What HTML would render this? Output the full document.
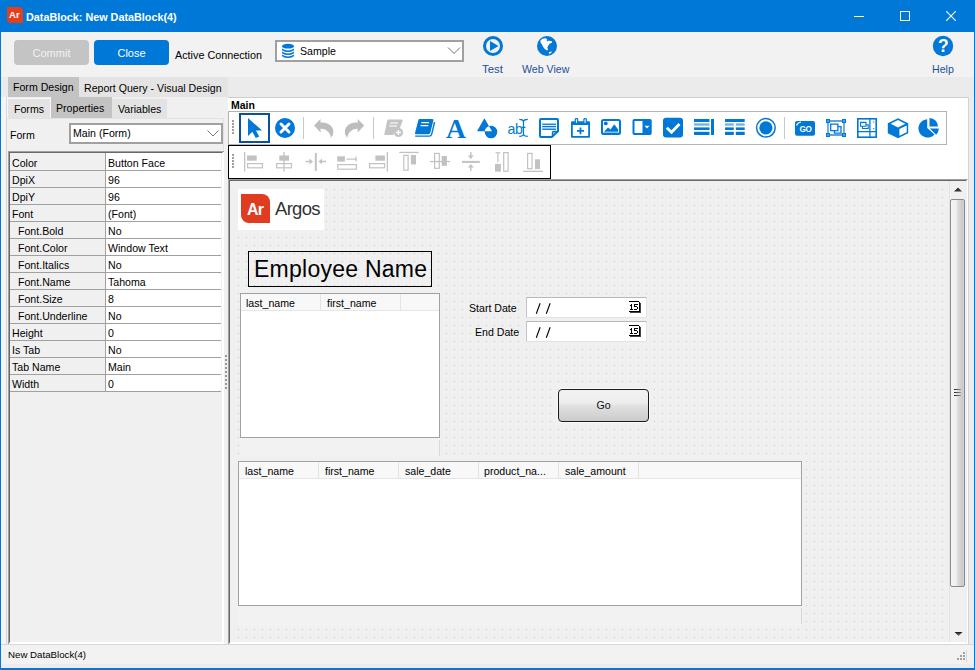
<!DOCTYPE html>
<html><head><meta charset="utf-8">
<style>
*{box-sizing:border-box;margin:0;padding:0}
html,body{width:975px;height:670px;overflow:hidden;background:#f0f0f0;font-family:"Liberation Sans",sans-serif;font-size:10.6px;color:#000}
.a{position:absolute}
.t{position:absolute;white-space:nowrap;line-height:1}
</style></head><body>
<!-- window frame -->
<div class="a" style="left:0;top:0;width:975px;height:670px;background:#0078d7"></div>
<div class="a" style="left:1px;top:32px;width:973px;height:636px;background:#f0f0f0"></div>
<!-- title bar -->
<div class="a" style="left:7px;top:7px;width:16px;height:16px;background:#e43f1c;border-radius:0 4px 0 4px"></div>
<div class="t" style="left:9px;top:10px;color:#fff;font-weight:bold;font-size:9.6px">Ar</div>
<div class="t" style="left:26px;top:12px;color:#fff;font-weight:bold;font-size:10.8px">DataBlock: New DataBlock(4)</div>
<div class="a" style="left:854px;top:16px;width:10px;height:1px;background:#fff"></div>
<div class="a" style="left:900px;top:11px;width:10px;height:10px;border:1px solid #fff"></div>
<svg class="a" style="left:946px;top:11px" width="10" height="10"><path d="M0 0L10 10M10 0L0 10" stroke="#fff" stroke-width="1.1"/></svg>

<!-- top toolbar -->
<div class="a" style="left:1px;top:32px;width:973px;height:45px;background:#f2f2f2"></div>
<div class="a" style="left:14px;top:40px;width:75px;height:25px;background:#c4c4c4;border-radius:4px"></div>
<div class="t" style="left:14px;top:48px;width:75px;text-align:center;color:#f2f2f2;font-size:11px">Commit</div>
<div class="a" style="left:94px;top:40px;width:75px;height:25px;background:#0078d7;border-radius:4px"></div>
<div class="t" style="left:94px;top:48px;width:75px;text-align:center;color:#fff;font-size:11px">Close</div>
<div class="t" style="left:175px;top:50px;font-size:10.8px">Active Connection</div>
<div class="a" style="left:275px;top:40px;width:189px;height:22px;background:#fff;border:2px solid #a0a0a0"></div>
<div class="t" style="left:300px;top:46px;font-size:10.6px">Sample</div>

<!-- tabs strip -->
<div class="a" style="left:1px;top:77px;width:973px;height:20px;background:#ebebeb"></div>
<div class="a" style="left:79px;top:77px;width:149px;height:20px;background:#e4e4e4"></div>


<!-- tabs -->
<div class="a" style="left:8px;top:77px;width:71px;height:20px;background:#c3c3c3"></div>
<div class="t" style="left:13px;top:82px">Form Design</div>
<div class="t" style="left:84px;top:83px">Report Query - Visual Design</div>
<!-- left panel -->
<div class="a" style="left:1px;top:97px;width:227px;height:548px;background:#f0f0f0"></div>
<div class="a" style="left:1px;top:97px;width:5px;height:548px;background:#f5f5f5"></div>
<div class="a" style="left:7px;top:98px;width:44px;height:20px;background:#e3e3e3;border:1px solid #f7f7f7;border-bottom:0"></div>
<div class="t" style="left:14px;top:104px">Forms</div>
<div class="a" style="left:51px;top:97px;width:61px;height:21px;background:#c3c3c3"></div>
<div class="t" style="left:56px;top:103px">Properties</div>
<div class="a" style="left:112px;top:99px;width:55px;height:19px;background:#e3e3e3"></div>
<div class="t" style="left:118px;top:104px">Variables</div>
<!-- panel -->
<div class="a" style="left:6px;top:97px;width:1px;height:548px;background:#d8d8d8"></div>
<div class="a" style="left:7px;top:118px;width:217px;height:1px;background:#e3e3e3"></div>
<div class="a" style="left:223px;top:118px;width:1px;height:527px;background:#e3e3e3"></div>
<div class="t" style="left:10px;top:130px">Form</div>
<div class="a" style="left:69px;top:123px;width:154px;height:21px;background:#fff;border:2px solid #a0a0a0"></div>
<div class="t" style="left:73px;top:128px">Main (Form)</div>
<svg class="a" style="left:207px;top:130px" width="12" height="8"><path d="M0.5 0.5L6 6L11.5 0.5" stroke="#777" fill="none" stroke-width="1"/></svg>
<!-- grid -->
<div class="a" style="left:8px;top:151px;width:216px;height:493px;border-left:2px solid #696969;border-top:2px solid #696969;border-right:2px solid #fff;border-bottom:2px solid #fff;background:#f0f0f0"></div>
<div class="a" style="left:8px;top:151px;width:1px;height:493px;background:#a0a0a0"></div>
<div class="a" style="left:8px;top:151px;width:216px;height:1px;background:#a0a0a0"></div>
<div class="a" style="left:106px;top:153px;width:115px;height:238px;background:#fff"></div>
<div class="a" style="left:105px;top:153px;width:1px;height:238px;background:#a0a0a0"></div>
<div class="t g" style="left:12px;top:158px">Color</div><div class="t g" style="left:108px;top:158px">Button Face</div>
<div class="a" style="left:10px;top:170px;width:211px;height:1px;background:#a0a0a0"></div>
<div class="t g" style="left:12px;top:175px">DpiX</div><div class="t g" style="left:108px;top:175px">96</div>
<div class="a" style="left:10px;top:187px;width:211px;height:1px;background:#a0a0a0"></div>
<div class="t g" style="left:12px;top:192px">DpiY</div><div class="t g" style="left:108px;top:192px">96</div>
<div class="a" style="left:10px;top:204px;width:211px;height:1px;background:#a0a0a0"></div>
<div class="t g" style="left:12px;top:209px">Font</div><div class="t g" style="left:108px;top:209px">(Font)</div>
<div class="a" style="left:10px;top:221px;width:211px;height:1px;background:#a0a0a0"></div>
<div class="t g" style="left:18px;top:226px">Font.Bold</div><div class="t g" style="left:108px;top:226px">No</div>
<div class="a" style="left:10px;top:238px;width:211px;height:1px;background:#a0a0a0"></div>
<div class="t g" style="left:18px;top:243px">Font.Color</div><div class="t g" style="left:108px;top:243px">Window Text</div>
<div class="a" style="left:10px;top:255px;width:211px;height:1px;background:#a0a0a0"></div>
<div class="t g" style="left:18px;top:260px">Font.Italics</div><div class="t g" style="left:108px;top:260px">No</div>
<div class="a" style="left:10px;top:272px;width:211px;height:1px;background:#a0a0a0"></div>
<div class="t g" style="left:18px;top:277px">Font.Name</div><div class="t g" style="left:108px;top:277px">Tahoma</div>
<div class="a" style="left:10px;top:289px;width:211px;height:1px;background:#a0a0a0"></div>
<div class="t g" style="left:18px;top:294px">Font.Size</div><div class="t g" style="left:108px;top:294px">8</div>
<div class="a" style="left:10px;top:306px;width:211px;height:1px;background:#a0a0a0"></div>
<div class="t g" style="left:18px;top:311px">Font.Underline</div><div class="t g" style="left:108px;top:311px">No</div>
<div class="a" style="left:10px;top:323px;width:211px;height:1px;background:#a0a0a0"></div>
<div class="t g" style="left:12px;top:328px">Height</div><div class="t g" style="left:108px;top:328px">0</div>
<div class="a" style="left:10px;top:340px;width:211px;height:1px;background:#a0a0a0"></div>
<div class="t g" style="left:12px;top:345px">Is Tab</div><div class="t g" style="left:108px;top:345px">No</div>
<div class="a" style="left:10px;top:357px;width:211px;height:1px;background:#a0a0a0"></div>
<div class="t g" style="left:12px;top:362px">Tab Name</div><div class="t g" style="left:108px;top:362px">Main</div>
<div class="a" style="left:10px;top:374px;width:211px;height:1px;background:#a0a0a0"></div>
<div class="t g" style="left:12px;top:379px">Width</div><div class="t g" style="left:108px;top:379px">0</div>
<div class="a" style="left:10px;top:391px;width:211px;height:1px;background:#a0a0a0"></div>
<!-- splitter -->
<div class="a" style="left:224px;top:97px;width:4px;height:548px;background:#f0f0f0"></div>

<!-- right panel -->
<div class="a" style="left:228px;top:98px;width:740px;height:81px;background:#fff"></div>
<div class="a" style="left:228px;top:97px;width:746px;height:1px;background:#cdcdcd"></div>
<div class="t" style="left:231px;top:100px;font-weight:bold;font-size:10.5px">Main</div>
<div class="a" style="left:228px;top:111px;width:719px;height:34px;border:1px solid #b4b4b4;background:#fff"></div>
<div class="a" style="left:228px;top:145px;width:323px;height:34px;border:1px solid #000;background:#fff"></div>
<!-- canvas -->
<div class="a" style="left:228px;top:179px;width:740px;height:466px;border-left:1px solid #a0a0a0;border-top:1px solid #a0a0a0;border-right:1px solid #fff;border-bottom:1px solid #d4d4d4;background:#f0f0f0"></div>
<div class="a" style="left:229px;top:180px;width:738px;height:464px;border-left:1px solid #696969;border-top:1px solid #696969;border-right:1px solid #f0f0f0;border-bottom:2px solid #fff"></div>
<svg class="a" style="left:238px;top:189px" width="706" height="450"><defs><pattern id="dots" width="8" height="8" patternUnits="userSpaceOnUse"><rect width="1" height="1" fill="#c4c4c4"/></pattern></defs><rect width="706" height="450" fill="url(#dots)"/></svg>
<!-- scrollbar -->
<div class="a" style="left:949px;top:181px;width:17px;height:461px;background:#f0f0f0;border-left:1px solid #e4e4e4"></div>
<svg class="a" style="left:953px;top:186px" width="10" height="7"><path d="M5 1.5L9 5.5H1Z" fill="#333"/></svg>
<div class="a" style="left:950px;top:199px;width:15px;height:388px;border:1px solid #8a8a8a;border-radius:2px;background:linear-gradient(to right,#f6f6f6 0%,#eeeeee 42%,#dcdcde 52%,#cacace 88%,#d6d6d6 100%)"></div>
<svg class="a" style="left:953px;top:388px" width="9" height="9"><defs><linearGradient id="gl"><stop offset="0" stop-color="#222"/><stop offset="1" stop-color="#999"/></linearGradient></defs><path d="M1 1.5H8M1 4.5H8M1 7.5H8" stroke="url(#gl)" stroke-width="1"/></svg>
<svg class="a" style="left:953px;top:630px" width="10" height="7"><defs><linearGradient id="ag" x1="0" y1="0" x2="0" y2="1"><stop offset="0" stop-color="#111"/><stop offset="1" stop-color="#888"/></linearGradient></defs><path d="M1.5 2H9.5L5.5 6Z" fill="url(#ag)"/></svg>
<div class="a" style="left:968px;top:97px;width:6px;height:548px;background:#ececec;border-left:1px solid #d4d4d4"></div>

<!-- logo -->
<div class="a" style="left:238px;top:189px;width:86px;height:41px;background:#fff"></div>
<div class="a" style="left:241px;top:194px;width:29px;height:29px;background:#e03c1f;border-radius:0 8px 0 8px"></div>
<div class="t" style="left:247px;top:202px;color:#fff;font-weight:bold;font-size:16px;letter-spacing:-0.8px">Ar</div>
<div class="t" style="left:275px;top:200px;color:#333;font-size:18.5px;letter-spacing:-0.7px">Argos</div>

<!-- employee name label -->
<div class="a" style="left:248px;top:251px;width:184px;height:36px;border:1px solid #000"></div>
<div class="t" style="left:254px;top:258px;font-size:23px;letter-spacing:0.25px">Employee Name</div>

<!-- employee listview -->
<div class="a" style="left:240px;top:293px;width:200px;height:164px;background:#f2f2f2"></div>
<div class="a" style="left:439px;top:440px;width:1px;height:16px;background:#d8d8d8"></div>
<div class="a" style="left:240px;top:293px;width:200px;height:145px;background:#fff;border:1px solid #a0a0a8"></div>
<div class="a" style="left:241px;top:294px;width:198px;height:17px;background:#f8f8f8;border-bottom:1px solid #e6e6e6"></div>
<div class="a" style="left:320px;top:294px;width:1px;height:16px;background:#e4e4e4"></div>
<div class="a" style="left:400px;top:294px;width:1px;height:16px;background:#e4e4e4"></div>
<div class="t" style="left:246px;top:298px">last_name</div>
<div class="t" style="left:327px;top:298px">first_name</div>

<!-- dates -->
<div class="t" style="left:469px;top:303px">Start Date</div>
<div class="t" style="left:475px;top:327px">End Date</div>
<div class="a" style="left:526px;top:297px;width:121px;height:21px;background:#fff;border:1px solid;border-color:#b8b8c0 #dfe3e8 #dfe3e8 #c4c4cc"></div>
<div class="a" style="left:526px;top:321px;width:121px;height:21px;background:#fff;border:1px solid;border-color:#b8b8c0 #dfe3e8 #dfe3e8 #c4c4cc"></div>
<svg class="a" style="left:530px;top:300px" width="24" height="16"><path d="M10.1 3.2L6.3 13.8M20.1 3.2L16.3 13.8" stroke="#000" stroke-width="1.1"/></svg>
<svg class="a" style="left:530px;top:324px" width="24" height="16"><path d="M10.1 3.2L6.3 13.8M20.1 3.2L16.3 13.8" stroke="#000" stroke-width="1.1"/></svg>

<!-- Go button -->
<div class="a" style="left:558px;top:389px;width:91px;height:33px;border:1px solid #1a1a1a;border-radius:4px;background:linear-gradient(#f2f2f2 0%,#ededed 42%,#e0e0e0 52%,#cbcbcb 100%);box-shadow:0 0 0 1px #fafafa"></div>
<div class="t" style="left:558px;top:400px;width:91px;text-align:center;color:#111">Go</div>

<!-- sales listview -->
<div class="a" style="left:238px;top:461px;width:564px;height:165px;background:#f2f2f2"></div>
<div class="a" style="left:801px;top:608px;width:1px;height:16px;background:#d8d8d8"></div>
<div class="a" style="left:238px;top:461px;width:564px;height:145px;background:#fff;border:1px solid #a0a0a8"></div>
<div class="a" style="left:239px;top:462px;width:562px;height:17px;background:#f8f8f8;border-bottom:1px solid #e6e6e6"></div>
<div class="a" style="left:318px;top:462px;width:1px;height:16px;background:#e4e4e4"></div>
<div class="a" style="left:398px;top:462px;width:1px;height:16px;background:#e4e4e4"></div>
<div class="a" style="left:478px;top:462px;width:1px;height:16px;background:#e4e4e4"></div>
<div class="a" style="left:558px;top:462px;width:1px;height:16px;background:#e4e4e4"></div>
<div class="a" style="left:638px;top:462px;width:1px;height:16px;background:#e4e4e4"></div>
<div class="t" style="left:245px;top:466px">last_name</div>
<div class="t" style="left:325px;top:466px">first_name</div>
<div class="t" style="left:405px;top:466px">sale_date</div>
<div class="t" style="left:484px;top:466px">product_na...</div>
<div class="t" style="left:565px;top:466px">sale_amount</div>

<!-- status bar -->
<div class="a" style="left:1px;top:645px;width:973px;height:23px;background:#f2f2f2"></div>
<div class="a" style="left:1px;top:644px;width:973px;height:1px;background:#d8d8d8"></div>
<div class="a" style="left:1px;top:664px;width:973px;height:4px;background:#ececec"></div>
<div class="t" style="left:8px;top:650px;font-size:9.7px">New DataBlock(4)</div>
<svg class="a" style="left:0;top:0" width="975" height="670">
<g fill="#0078d7">
<!-- database -->
<ellipse cx="288" cy="46.2" rx="6" ry="2.4"/>
<path d="M282 48.5 Q288 52.5 294 48.5 V50.2 Q288 54 282 50.2Z M282 51.5 Q288 55.5 294 51.5 V53.2 Q288 57 282 53.2Z M282 54.5 Q288 58.5 294 54.5 V56.2 Q288 60 282 56.2Z"/>
<!-- test -->
<path fill-rule="evenodd" d="M493 36A10 10 0 1 1 493 56A10 10 0 1 1 493 36ZM493 39A7 7 0 1 0 493 53A7 7 0 1 0 493 39Z"/>
<path d="M490 41L498.5 46L490 51Z"/>
<!-- globe -->
<circle cx="547" cy="46" r="10"/>
<path fill="#fff" d="M540.3 40.8 L542.3 38.7 L545.6 38.3 L547.2 39.2 L546.6 40.2 L547.7 41.4 L548.6 40.6 L549.3 40.8 L551.8 41.2 L552.2 42.4 L549.7 43.7 L548.5 45.3 L547.3 47.4 L548.1 49.4 L546.9 50.6 L544.8 49 L543.2 47 L542 44.5 L540.7 42.8Z M548.9 51.9 L552.2 51.5 L550.5 53.5 L548.9 53.7Z"/>
<!-- help -->
<circle cx="943" cy="46" r="10.2"/>
</g>
<text x="943.3" y="52" fill="#fff" font-family="Liberation Sans" font-weight="bold" font-size="17.5" text-anchor="middle">?</text>
<!-- combo chevrons -->
<path d="M448 47.5L454 53.5L460 47.5" stroke="#707070" fill="none" stroke-width="1"/>
<!-- toolbar1 grip -->
<g fill="#a0a0a0">
<rect x="232" y="120" width="2" height="2"/><rect x="232" y="123" width="2" height="2"/><rect x="232" y="126" width="2" height="2"/><rect x="232" y="129" width="2" height="2"/><rect x="232" y="132" width="2" height="2"/>
<rect x="232" y="154" width="2" height="2"/><rect x="232" y="157" width="2" height="2"/><rect x="232" y="160" width="2" height="2"/><rect x="232" y="163" width="2" height="2"/><rect x="232" y="166" width="2" height="2"/>
</g>
<!-- selection box -->
<rect x="240" y="114" width="29" height="28" fill="none" stroke="#0a52a0" stroke-width="2"/>
<g fill="#0078d7">
<path d="M248 118 L248 136 L252.3 131.8 L255.8 138 L259.2 136.4 L256 130.5 L262 130.5 Z"/>
<circle cx="285" cy="128" r="10"/>
</g>
<path d="M281 124L289 132M289 124L281 132" stroke="#fff" stroke-width="3" stroke-linecap="round"/>
<!-- separators -->
<g fill="#c8c8c8"><rect x="303" y="117" width="1" height="22"/><rect x="373" y="117" width="1" height="22"/><rect x="784" y="117" width="1" height="22"/></g>
<!-- undo / redo -->
<g fill="#bdbdbf">
<path d="M314 125.5 L320.5 119 V122.6 Q329 122.3 332.5 128 Q335 133 331 137.8 Q330 132 325 129.5 Q323 128.6 320.5 128.7 V132.5 Z"/>
<path transform="translate(678.2 0) scale(-1 1)" d="M314 125.5 L320.5 119 V122.6 Q329 122.3 332.5 128 Q335 133 331 137.8 Q330 132 325 129.5 Q323 128.6 320.5 128.7 V132.5 Z"/>
</g>
<!-- book add (grey) -->
<g fill="#c4c4c4">
<path d="M388 119.5 H401.5 Q403 119.5 402.6 121 L399.5 129 Q394 130 393.5 135 H385.5 Q384 135 384.4 133.5 L387.3 120.5 Q387.5 119.5 388 119.5Z"/>
<circle cx="398.5" cy="132.5" r="4.6"/>
</g>
<path d="M390 123H398M389.3 126H397" stroke="#fff" stroke-width="1.2"/>
<path d="M398.5 130V135M396 132.5H401" stroke="#fff" stroke-width="1.3"/>
<!-- book blue -->
<path fill="#0078d7" d="M419.6 119 H432.4 Q433.8 119 433.4 120.5 L430.3 132.8 Q429.9 134.2 428.5 134.2 H416 Q414.7 134.2 415 132.9 L418.3 120.3 Q418.6 119 419.6 119 Z"/>
<path d="M415.2 136.1 H429.2 Q431.2 136.1 431.7 134.1 L434.6 122" stroke="#0078d7" stroke-width="1.4" fill="none"/>
<path d="M421.3 122.7H429M420.6 125.7H428.3" stroke="#fff" stroke-width="1.3"/>
<!-- A -->
<text x="456" y="137.6" fill="#0078d7" font-family="Liberation Serif" font-weight="bold" font-size="27.5" text-anchor="middle">A</text>
<!-- shapes -->
<path fill="#0078d7" fill-rule="evenodd" d="M484.4 118.3 L492 131.3 H477 Z M491 125.7 A6.3 6.3 0 1 1 484.7 132 A6.3 6.3 0 0 1 491 125.7Z"/>
<!-- abI -->
<text x="507.6" y="134.3" fill="#0078d7" font-family="Liberation Sans" font-size="14.2" letter-spacing="-0.6">ab</text>
<path d="M519.3 119.3 Q523 119.3 523.5 121.3 V134.3 Q523 136.3 519.3 136.3 M527.8 119.3 Q524 119.3 523.5 121.3 M527.8 136.3 Q524 136.3 523.5 134.3 M522 127.4 H525.5" stroke="#0078d7" fill="none" stroke-width="1.2"/>
<!-- memo -->
<path d="M541 119 H557 Q558 119 558 120 V131.2 L551.8 137 H541 Q540 137 540 136 V120 Q540 119 541 119 Z" fill="none" stroke="#0078d7" stroke-width="2" stroke-linejoin="round"/>
<path d="M558 131.6 H553.6 Q552.6 131.6 552.6 132.6 V137" fill="none" stroke="#0078d7" stroke-width="1.6"/>
<rect x="542.2" y="123.6" width="13.8" height="1.3" fill="#0078d7"/>
<rect x="542.2" y="125.9" width="13.8" height="1.3" fill="#0078d7"/>
<rect x="542.2" y="127.3" width="13.8" height="1.2" fill="#a9d0f3"/>
<rect x="542.2" y="128.6" width="13.8" height="1.3" fill="#0078d7"/>
<!-- calendar -->
<path fill="#0078d7" fill-rule="evenodd" d="M572 121.3 H589 Q590 121.3 590 122.3 V136.8 Q590 137.8 589 137.8 H572 Q571 137.8 571 136.8 V122.3 Q571 121.3 572 121.3Z M572.8 125 V136 H588.2 V125Z"/>
<g fill="#fff" stroke="#0078d7" stroke-width="1.2"><rect x="575.3" y="118.6" width="2.4" height="4.8" rx="0.8"/><rect x="583.9" y="118.6" width="2.4" height="4.8" rx="0.8"/></g>
<path d="M580.5 127.5V134.3M577 130.9H584" stroke="#0078d7" stroke-width="1.8"/>
<!-- image -->
<rect x="602" y="120" width="18" height="14" rx="1.5" fill="none" stroke="#0078d7" stroke-width="2"/>
<circle cx="605.8" cy="123.4" r="1.9" fill="#0078d7"/>
<path fill="#0078d7" d="M604 131.8 L608 127.5 L610.5 129.5 L614.2 124.3 L618.2 129.5 V131.8Z"/>
<rect x="603.5" y="132" width="15" height="1" fill="#8cc0ee"/>
<!-- combo icon -->
<path fill="#0078d7" fill-rule="evenodd" d="M634.3 119 H650 Q651.7 119 651.7 120.8 V133.2 Q651.7 135 650 135 H634.3 Q632.5 135 632.5 133.2 V120.8 Q632.5 119 634.3 119Z M634.5 121 V133 H642.5 V121Z"/>
<path fill="#fff" d="M644.5 125.8H649.5L647 128.6Z"/>
<!-- checkbox -->
<rect x="663" y="117.8" width="20" height="19.8" rx="3" fill="#0078d7"/>
<path d="M666.8 127.8 L671.5 132.3 L679.5 124" stroke="#fff" stroke-width="2.8" fill="none"/>
<!-- list -->
<g fill="#0078d7">
<rect x="694" y="119" width="15.5" height="3"/><rect x="694" y="127.4" width="15.5" height="2.6"/><rect x="694" y="131.8" width="15.5" height="3.2"/><rect x="711" y="119" width="3" height="16"/>
<rect x="725" y="119" width="19.7" height="3"/><rect x="725" y="127.4" width="8.8" height="2.6"/><rect x="735.8" y="127.4" width="8.9" height="2.6"/><rect x="725" y="131.8" width="8.8" height="3.2"/><rect x="735.8" y="131.8" width="8.9" height="3.2"/>
</g>
<g fill="#74b4ec">
<rect x="694" y="123.3" width="15.5" height="2.4"/>
<rect x="725" y="123.3" width="8.8" height="2.4"/><rect x="735.8" y="123.3" width="8.9" height="2.4"/>
</g>
<!-- radio -->
<circle cx="765.9" cy="127.8" r="9.3" fill="none" stroke="#0078d7" stroke-width="1.5"/>
<circle cx="765.9" cy="127.8" r="6.6" fill="#0078d7"/>
<!-- GO -->
<rect x="795" y="121" width="20" height="14.8" rx="2" fill="#0078d7"/>
<text x="805.5" y="132.3" fill="#fff" font-family="Liberation Sans" font-weight="bold" font-size="8.2" text-anchor="middle" letter-spacing="-0.3">GO</text>
<path d="M796.5 125.5 Q797.5 122.5 801 122" stroke="#fff" stroke-width="1.2" fill="none"/>
<!-- frame -->
<path d="M828 122.5V133.5M844 122.5V133.5M829.5 121H842.5M829.5 135H842.5" stroke="#2a86da" stroke-width="1.3"/>
<g fill="#0078d7"><rect x="826" y="119" width="4" height="4"/><rect x="842" y="119" width="4" height="4"/><rect x="826" y="133" width="4" height="4"/><rect x="842" y="133" width="4" height="4"/></g>
<g fill="#9ccaf2"><rect x="827.3" y="120.3" width="1.4" height="1.4"/><rect x="843.3" y="120.3" width="1.4" height="1.4"/><rect x="827.3" y="134.3" width="1.4" height="1.4"/><rect x="843.3" y="134.3" width="1.4" height="1.4"/></g>
<path d="M830.7 124.2H837.9V130.6H830.7Z M838 126.7H841V133.1H834.4V130.7" stroke="#0078d7" stroke-width="1.3" fill="none"/>
<!-- panel -->
<rect x="857.8" y="118.8" width="18.4" height="18.4" fill="none" stroke="#0078d7" stroke-width="1.6"/>
<path d="M858 131.6H876M869.9 119V137" stroke="#0078d7" stroke-width="1.3"/>
<path d="M860.6 122.4H866V126.3H860.6Z M866 124.8H868.2V128.5H862.5V126.3" stroke="#0078d7" stroke-width="1.1" fill="none"/>
<path d="M872.6 122.6L873.6 121.3L874.6 122.6ZM872.6 128.2L873.6 129.5L874.6 128.2Z" fill="#0078d7"/>
<!-- cube -->
<path fill="#0078d7" fill-rule="evenodd" d="M898 118.2 L908.2 123.3 V133.3 L898 138.2 L887.8 133.3 V123.3 Z M898 120 L890.6 123.7 L898 127.5 L905.4 123.7Z M899.4 129.1 V135.8 L906.7 132.3 V125.4Z"/>
<!-- pie -->
<path fill="#0078d7" d="M927.2 119.2 A9.2 9.2 0 1 0 934.5 134.5 L927.2 128Z M929.5 118 A8.6 8.6 0 0 1 938 126.5 H929.5Z M929.8 128.5 H938.8 A9 9 0 0 1 936.2 134.8Z"/>
<!-- toolbar2 alignment icons -->
<g fill="#c2c2c2">
<!-- align left -->
<rect x="244" y="152" width="1.3" height="19.5"/>
<rect x="247" y="155.5" width="9.7" height="5.2"/>
<!-- align center -->
<rect x="283.3" y="152" width="1.3" height="19.5"/>
<rect x="279.3" y="155.5" width="9.7" height="5.2"/>
<!-- center horiz -->
<rect x="314.8" y="153" width="2" height="18"/>
<path d="M305.5 160.8H309.5V158.5L313 161.5L309.5 164.5V162.2H305.5Z"/>
<path d="M326 160.8H322V158.5L318.5 161.5L322 164.5V162.2H326Z"/>
<!-- same width -->
<rect x="337.2" y="156.3" width="7.7" height="5.3"/>
<rect x="346.5" y="158.5" width="10" height="1.2"/>
<rect x="355.5" y="156.5" width="1.2" height="5"/>
<!-- align right -->
<rect x="386.7" y="152" width="1.3" height="19.5"/>
<rect x="375.4" y="155.5" width="9.5" height="5.2"/>
<!-- align top -->
<rect x="399.3" y="151.8" width="19.5" height="1.3"/>
<rect x="410.9" y="155" width="5.1" height="9.5"/>
<!-- align middle -->
<rect x="430" y="160.9" width="20" height="1.3"/>
<rect x="441.7" y="156" width="5.2" height="9.8"/>
<!-- center vert -->
<rect x="462" y="160.9" width="17.8" height="2"/>
<path d="M470.1 152V155.5H467.8L470.8 159L473.8 155.5H471.5V152Z"/>
<path d="M470.1 171V167.5H467.8L470.8 164L473.8 167.5H471.5V171Z"/>
<!-- same height -->
<rect x="495" y="163.9" width="5.9" height="7.8"/>
<rect x="497.3" y="153" width="1.2" height="9.5"/>
<rect x="495.5" y="152.2" width="4.8" height="1.2"/>
<!-- align bottom -->
<rect x="523" y="170.7" width="19.8" height="1.3"/>
<rect x="535" y="159.3" width="5" height="9.8"/>
</g>
<g fill="none" stroke="#c2c2c2" stroke-width="1.2">
<rect x="247.6" y="163.6" width="14.9" height="4.2"/>
<rect x="276.6" y="163.6" width="14.9" height="4.2"/>
<rect x="337.8" y="164.6" width="18.6" height="4.6"/>
<rect x="369.6" y="163.6" width="14.9" height="4.2"/>
<rect x="403.8" y="155.4" width="4.3" height="14.8"/>
<rect x="434.6" y="153.4" width="4.7" height="14.9"/>
<rect x="503.7" y="152.6" width="4.4" height="18.6"/>
<rect x="527.6" y="153.4" width="4.4" height="15.3"/>
</g>
</svg>


<div class="t" style="left:482px;top:64px;color:#1f4f9a;font-size:11.4px">Test</div>
<div class="t" style="left:522px;top:64px;color:#1f4f9a">Web View</div>
<div class="t" style="left:932px;top:64px;color:#1f4f9a">Help</div>
<!-- date cal icons -->
<svg class="a" style="left:628px;top:301px" width="14" height="14" shape-rendering="crispEdges"><g fill="#000"><rect x="1" y="0" width="10" height="1"/><rect x="11" y="1" width="1" height="11"/><rect x="12" y="2" width="1" height="10" fill="#444"/><rect x="1" y="10" width="11" height="1"/><rect x="2" y="11" width="11" height="1" fill="#444"/>
<rect x="3" y="3" width="1" height="6"/><rect x="2" y="4" width="1" height="1"/><rect x="2" y="8" width="3" height="1"/>
<rect x="6" y="3" width="4" height="1"/><rect x="6" y="4" width="1" height="2"/><rect x="6" y="5" width="3" height="1"/><rect x="9" y="6" width="1" height="2"/><rect x="6" y="8" width="3" height="1"/></g></svg>
<svg class="a" style="left:628px;top:325px" width="14" height="14" shape-rendering="crispEdges"><g fill="#000"><rect x="1" y="0" width="10" height="1"/><rect x="11" y="1" width="1" height="11"/><rect x="12" y="2" width="1" height="10" fill="#444"/><rect x="1" y="10" width="11" height="1"/><rect x="2" y="11" width="11" height="1" fill="#444"/>
<rect x="3" y="3" width="1" height="6"/><rect x="2" y="4" width="1" height="1"/><rect x="2" y="8" width="3" height="1"/>
<rect x="6" y="3" width="4" height="1"/><rect x="6" y="4" width="1" height="2"/><rect x="6" y="5" width="3" height="1"/><rect x="9" y="6" width="1" height="2"/><rect x="6" y="8" width="3" height="1"/></g></svg>
<!-- splitter grip -->
<svg class="a" style="left:225px;top:355px" width="3" height="36"><g fill="#969696"><rect x="0" y="0" width="2" height="2"/><rect x="0" y="4" width="2" height="2"/><rect x="0" y="8" width="2" height="2"/><rect x="0" y="12" width="2" height="2"/><rect x="0" y="16" width="2" height="2"/><rect x="0" y="20" width="2" height="2"/><rect x="0" y="24" width="2" height="2"/><rect x="0" y="28" width="2" height="2"/><rect x="0" y="32" width="2" height="2"/></g></svg>
<!-- status grip -->
<svg class="a" style="left:955px;top:650px" width="14" height="14"><g fill="#a0a0a0"><rect x="8" y="2" width="2" height="2"/><rect x="5" y="5" width="2" height="2"/><rect x="8" y="5" width="2" height="2"/><rect x="2" y="8" width="2" height="2"/><rect x="5" y="8" width="2" height="2"/><rect x="8" y="8" width="2" height="2"/></g><rect x="11" y="0" width="1" height="12" fill="#d8d8d8"/></svg>
</body></html>
